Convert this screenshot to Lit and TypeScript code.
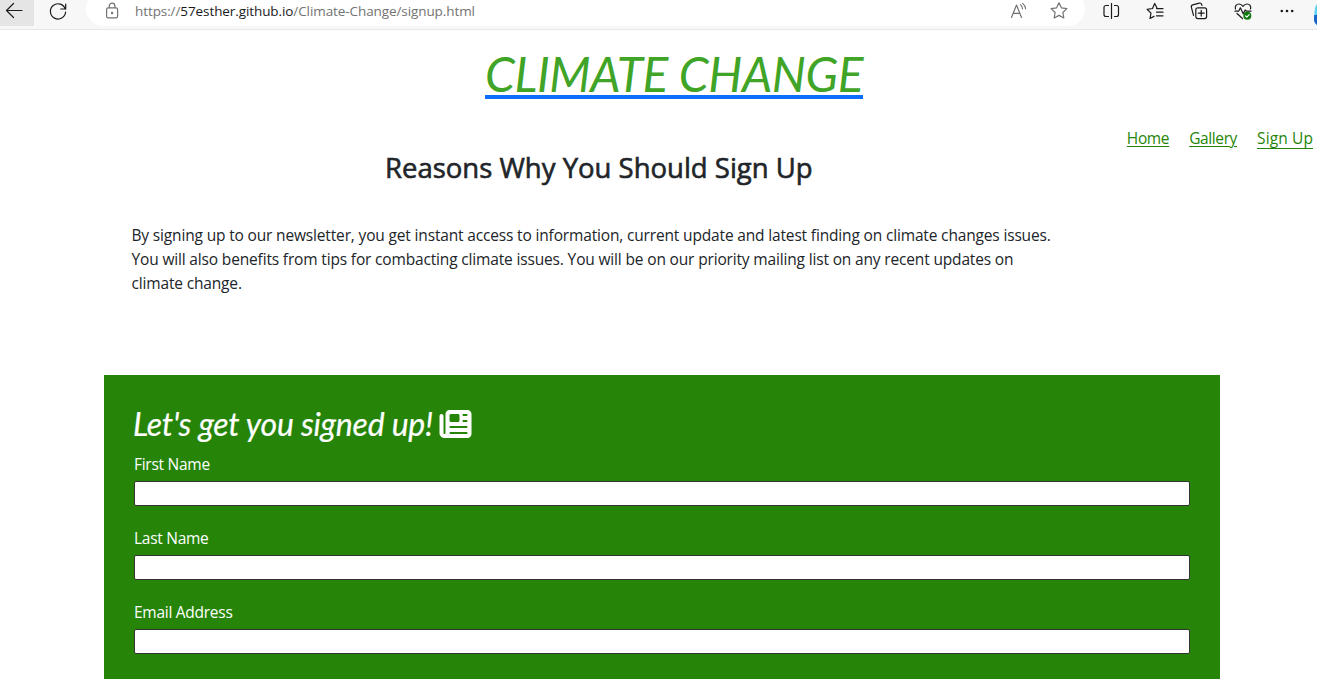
import { LitElement, html, css, svg } from "lit";

const icon = (body: unknown, w = 20, h = 20) => html`<svg width=${w} height=${h} viewBox="0 0 ${w} ${h}" fill="none" stroke="currentColor" stroke-width="1.2" stroke-linecap="round" stroke-linejoin="round">${body}</svg>`;

const star = "M10 1.8l2.4 5 5.5.8-4 3.9.9 5.5-4.8-2.6L5.200 17l.9-5.500-4-3.900 5.500-.8z";

const icons = {
  back: icon(svg`<path d="M18 10.500H2.500M9.500 3.500l-7 7 7 7"/>`),
  reload: icon(svg`<path d="M17.300 8.200A7.600 7.600 0 1 0 17.600 11M17.700 3v5h-5"/>`),
  lock: icon(svg`<rect x="4.600" y="6.900" width="11" height="10" rx="1.600"/><path d="M7.300 6.700V5a2.800 2.800 0 0 1 5.600 0v1.700"/><circle cx="10.100" cy="12" r=".6" fill="currentColor"/>`),
  read: icon(svg`<path d="M2.500 16.500L7.500 4l5 12.500M4.200 12.300h6.600M11.500 3.600q1.900 1.700 2 4.200M13.700 2.400q2.600 2.200 2.900 5.400"/>`),
  star: icon(svg`<path d=${star}/>`),
  split: icon(svg`<path stroke-linecap="butt" d="M10.500 2v16M8 4.500H5a2 2 0 0 0-2 2v7a2 2 0 0 0 2 2h3M13 4.500h2.500a2 2 0 0 1 2 2v7a2 2 0 0 1-2 2H13"/>`),
  favorites: icon(svg`<path d="M14.500 7.600h-2.300L9.700 2.500 7.500 7.500l-5.400.8 3.900 3.800-1 5.400 4-2.100M11.500 7.600H18M11.500 11.200H18M11.500 14.800H18"/>`),
  collections: icon(svg`<rect x="6.800" y="6.800" width="10.800" height="10.800" rx="2"/><path d="M12.200 9.300v5.800M9.300 12.200h5.800M4.500 14.300l-2.100-8a2 2 0 0 1 1.400-2.400l6.500-1.800a2 2 0 0 1 2.400 1.400l.2.800"/>`),
  health: icon(svg`<path d="M2.500 8C1.600 5 3.500 3 6 3c1.800 0 3.100 1 4 2.300C10.900 4 12.200 3 14 3c2.500 0 4.400 2 3.500 5M4 12.500l5.500 5M2 10.200h3.600l1.800-3.400 2.800 6 2-3.800 1 1.200H18"/><circle cx="14.300" cy="14.800" r="4" fill="#0f7b0f" stroke="none"/><path stroke="#fff" stroke-width="1.100" d="M12.500 14.900l1.300 1.300 2.400-2.600"/>`),
  more: icon(svg`<g fill="currentColor" stroke="none"><circle cx="4.800" cy="10" r="1.300"/><circle cx="10" cy="10" r="1.300"/><circle cx="15.200" cy="10" r="1.300"/></g>`),
};

class BrowserBar extends LitElement {
  static styles = css`
    :host { display: flex; box-sizing: border-box; height: 30px; overflow: hidden; background: #f7f7f7; border-bottom: 1px solid #e8e8e8; color: #1b1b1b; font-family: "Open Sans", "Noto Sans", sans-serif; }
    svg { display: block; flex: none; }
    .back, .reload, .address, .tools { flex: none; }
    .back { width: 34px; height: 26px; background: #e5e5e5; box-sizing: border-box; padding: 0 0 0 4px; }
    .reload { width: 52px; padding-left: 14px; box-sizing: border-box; }
    .reload svg, .tools svg { margin-top: 1px; }
    .address { display: flex; box-sizing: border-box; width: 999px; height: 34px; margin-top: -8px; padding: 9px 16px 0 16px; background: #fff; border-radius: 17px; color: #737373; }
    .url { margin: 0 auto 0 13px; font-size: 13.5px; letter-spacing: -0.09px; line-height: 20px; white-space: nowrap; }
    .host { color: #1a1a1a; }
    .read { margin-right: 20px; }
    .tools { display: flex; gap: 24px; margin-left: 16px; }
    .assistant { width: 24px; height: 28px; margin-left: 16px; }
  `;
  render() {
    return html`
      <div class="back">${icons.back}</div>
      <div class="reload">${icons.reload}</div>
      <div class="address">
        ${icons.lock}
        <span class="url">https://<span class="host">57esther.github.io</span>/Climate-Change/signup.html</span>
        <span class="read">${icons.read}</span>
        ${icons.star}
      </div>
      <div class="tools">${icons.split}${icons.favorites}${icons.collections}${icons.health}${icons.more}</div>
      <svg class="assistant" viewBox="0 0 24 28">
        <path d="M6 3Q2 4 1.500 12L1 19q0 5 5 7h9V3z" fill="#5fd0f5"/>
        <path d="M1.200 15L1 19q0 5 5 7V15z" fill="#1b62c8"/>
      </svg>
    `;
  }
}
customElements.define("browser-bar", BrowserBar);

class SignupForm extends LitElement {
  static styles = css`
    :host { display: block; box-sizing: border-box; background: #268508; color: #fff; padding: 30px; font-family: "Open Sans", "Noto Sans", sans-serif; }
    h2 { display: flex; align-items: center; margin: 0 0 9px -1px; font: italic 400 32px/38px Lato, sans-serif; letter-spacing: -0.23px; -webkit-text-stroke: 0.2px #fff; white-space: nowrap; }
    h2 svg { margin-left: 6px; }
    label { display: block; margin-bottom: 5px; font-size: 15.5px; line-height: 24px; letter-spacing: -0.27px; }
    input { display: block; box-sizing: border-box; width: 100%; height: 25px; margin: 0 0 20px; padding: 0 4px; border: 1px solid #333; border-radius: 2px; background: #fff; }
  `;
  fields = ["First Name", "Last Name", "Email Address"];
  render() {
    return html`
      <h2>Let's get you signed up!
        <svg width="33" height="32" viewBox="0 0 512 512" fill="#fff"><path d="M96 96c0-35.300 28.700-64 64-64H448c35.300 0 64 28.700 64 64V416c0 35.300-28.700 64-64 64H80c-44.200 0-80-35.800-80-80V128c0-17.700 14.300-32 32-32s32 14.300 32 32V400c0 8.800 7.200 16 16 16s16-7.200 16-16V96zm64 24v80c0 13.300 10.700 24 24 24H296c13.300 0 24-10.700 24-24V120c0-13.300-10.700-24-24-24H184c-13.300 0-24 10.700-24 24zm208-8c0 8.800 7.200 16 16 16h48c8.800 0 16-7.200 16-16s-7.200-16-16-16H384c-8.800 0-16 7.200-16 16zm0 96c0 8.800 7.200 16 16 16h48c8.800 0 16-7.200 16-16s-7.200-16-16-16H384c-8.800 0-16 7.200-16 16zM160 304c0 8.800 7.200 16 16 16H432c8.800 0 16-7.200 16-16s-7.200-16-16-16H176c-8.800 0-16 7.200-16 16zm0 96c0 8.800 7.200 16 16 16H432c8.800 0 16-7.200 16-16s-7.200-16-16-16H176c-8.800 0-16 7.200-16 16z"/></svg>
      </h2>
      ${this.fields.map((f, i) => html`<label for="f${i}">${f}</label><input id="f${i}" type="text" />`)}
    `;
  }
}
customElements.define("signup-form", SignupForm);

class AppRoot extends LitElement {
  static styles = css`
    :host { display: block; height: 679px; overflow: hidden; background: #fff; color: #212529; font-family: "Open Sans", "Noto Sans", sans-serif; }
    h1, h2, p { margin: 0; }
    h1 { display: flex; height: 96px; box-sizing: border-box; padding: 16px 0 0 485px; font: italic 400 48px/56px Lato, sans-serif; letter-spacing: -0.44px; white-space: nowrap; }
    .brand { box-sizing: border-box; height: 53px; border-bottom: 4px solid #0d6efd; color: #40a427; text-decoration: none; }
    nav { display: flex; justify-content: flex-end; gap: 20px; height: 25px; padding-right: 4px; font-size: 15.5px; line-height: 24px; }
    nav a { color: #268508; text-decoration: underline; text-decoration-thickness: 1px; text-underline-offset: 2px; letter-spacing: -0.38px; }
    nav a.current { box-sizing: border-box; height: 23px; text-decoration: none; border-bottom: 1px solid #268508; letter-spacing: 0.12px; }
    h2 { padding-left: 385px; font-size: 27.5px; font-weight: 500; line-height: 34px; white-space: nowrap; -webkit-text-stroke: 0.6px #212529; }
    p { padding: 38px 0 80px 131.500px; font-size: 15.5px; line-height: 24px; letter-spacing: -0.16px; white-space: nowrap; }
    signup-form { margin: 0 97px 0 104px; height: 400px; }
  `;
  render() {
    return html`
      <browser-bar></browser-bar>
      <h1><a class="brand">CLIMATE CHANGE</a></h1>
      <nav><a>Home</a><a>Gallery</a><a class="current">Sign Up</a></nav>
      <h2>Reasons Why You Should Sign Up</h2>
      <p>By signing up to our newsletter, you get instant access to information, current update and latest finding on climate changes issues.<br />You will also benefits from tips for combacting climate issues. You will be on our priority mailing list on any recent updates on<br />climate change.</p>
      <signup-form></signup-form>
    `;
  }
}
customElements.define("app-root", AppRoot);
